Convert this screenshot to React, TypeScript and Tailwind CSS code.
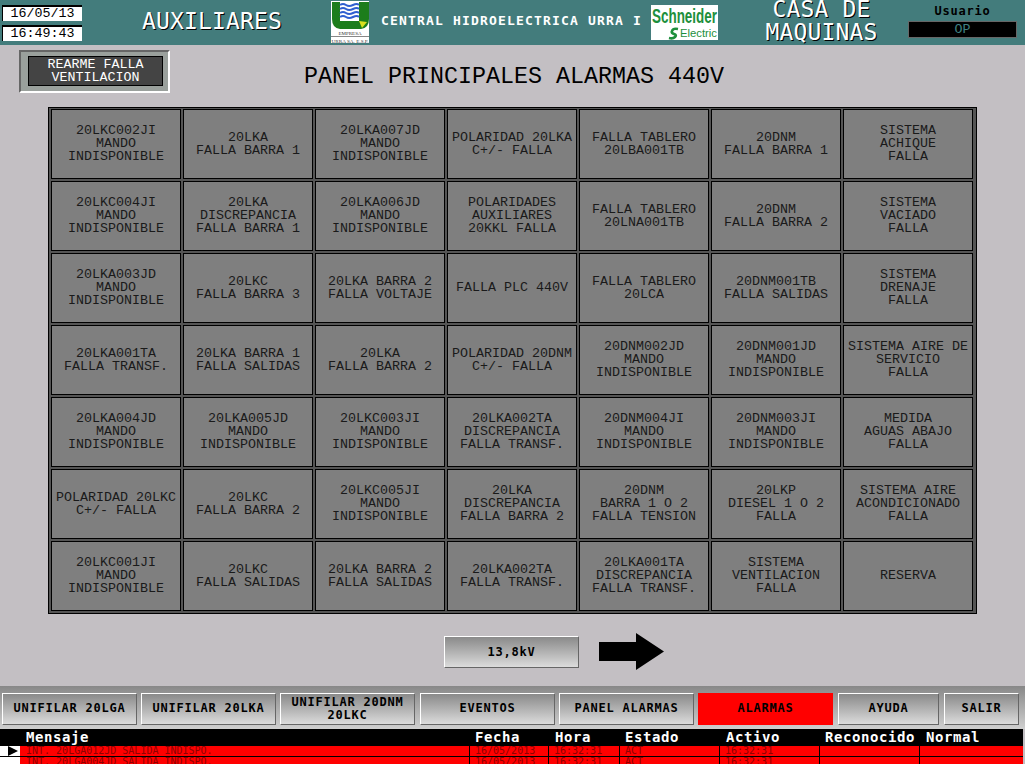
const rows: string[][] = [
  ["20LKC002JI\nMANDO\nINDISPONIBLE", "20LKA\nFALLA BARRA 1", "20LKA007JD\nMANDO\nINDISPONIBLE", "POLARIDAD 20LKA\nC+/- FALLA", "FALLA TABLERO\n20LBA001TB", "20DNM\nFALLA BARRA 1", "SISTEMA\nACHIQUE\nFALLA"],
  ["20LKC004JI\nMANDO\nINDISPONIBLE", "20LKA\nDISCREPANCIA\nFALLA BARRA 1", "20LKA006JD\nMANDO\nINDISPONIBLE", "POLARIDADES\nAUXILIARES\n20KKL FALLA", "FALLA TABLERO\n20LNA001TB", "20DNM\nFALLA BARRA 2", "SISTEMA\nVACIADO\nFALLA"],
  ["20LKA003JD\nMANDO\nINDISPONIBLE", "20LKC\nFALLA BARRA 3", "20LKA BARRA 2\nFALLA VOLTAJE", "FALLA PLC 440V", "FALLA TABLERO\n20LCA", "20DNM001TB\nFALLA SALIDAS", "SISTEMA\nDRENAJE\nFALLA"],
  ["20LKA001TA\nFALLA TRANSF.", "20LKA BARRA 1\nFALLA SALIDAS", "20LKA\nFALLA BARRA 2", "POLARIDAD 20DNM\nC+/- FALLA", "20DNM002JD\nMANDO\nINDISPONIBLE", "20DNM001JD\nMANDO\nINDISPONIBLE", "SISTEMA AIRE DE\nSERVICIO\nFALLA"],
  ["20LKA004JD\nMANDO\nINDISPONIBLE", "20LKA005JD\nMANDO\nINDISPONIBLE", "20LKC003JI\nMANDO\nINDISPONIBLE", "20LKA002TA\nDISCREPANCIA\nFALLA TRANSF.", "20DNM004JI\nMANDO\nINDISPONIBLE", "20DNM003JI\nMANDO\nINDISPONIBLE", "MEDIDA\nAGUAS ABAJO\nFALLA"],
  ["POLARIDAD 20LKC\nC+/- FALLA", "20LKC\nFALLA BARRA 2", "20LKC005JI\nMANDO\nINDISPONIBLE", "20LKA\nDISCREPANCIA\nFALLA BARRA 2", "20DNM\nBARRA 1 O 2\nFALLA TENSION", "20LKP\nDIESEL 1 O 2\nFALLA", "SISTEMA AIRE\nACONDICIONADO\nFALLA"],
  ["20LKC001JI\nMANDO\nINDISPONIBLE", "20LKC\nFALLA SALIDAS", "20LKA BARRA 2\nFALLA SALIDAS", "20LKA002TA\nFALLA TRANSF.", "20LKA001TA\nDISCREPANCIA\nFALLA TRANSF.", "SISTEMA\nVENTILACION\nFALLA", "RESERVA"],
];

const navButtons = [
  { label: "UNIFILAR 20LGA", width: "w-[135px]", gap: "mr-[4px]" },
  { label: "UNIFILAR 20LKA", width: "w-[135px]", gap: "mr-[4px]" },
  { label: "UNIFILAR 20DNM\n20LKC", width: "w-[135px]", gap: "mr-[5px]" },
  { label: "EVENTOS", width: "w-[135px]", gap: "mr-[4px]" },
  { label: "PANEL ALARMAS", width: "w-[135px]", gap: "mr-[4px]" },
  { label: "ALARMAS", width: "w-[135px]", gap: "mr-[5px]", active: true },
  { label: "AYUDA", width: "w-[101px]", gap: "mr-[5px]" },
  { label: "SALIR", width: "w-[75px]", gap: "" },
];

const alarmRows = [
  "INT. 20LGA012JD SALIDA INDISPO.",
  "INT. 20LGA004JD SALIDA INDISPO.",
];

function UrraLogo() {
  return (
    <svg width="38" height="42" viewBox="0 0 38 42" className="shrink-0">
      <rect width="38" height="42" fill="#fff" />
      <path d="M1 1h37v17q0 9-8 10H9q-8-1-8-10z" fill="#1c7d1c" />
      <rect x="9" y="1" width="19" height="19" fill="#fff" />
      <path d="M9 4q3-2 6 0t7 0 6 0M9 8q3-2 6 0t7 0 6 0M9 12q3-2 6 0t7 0 6 0M9 16q3-2 6 0t7 0 6 0" fill="none" stroke="#2f5fd0" strokeWidth="2" />
      <path d="M28 20l8 1-5 6z" fill="#d8e020" />
      <text x="19" y="34" textAnchor="middle" fontSize="5" fontFamily="Liberation Serif" fill="#333">EMPRESA</text>
      <line x1="0" y1="35.5" x2="38" y2="35.5" stroke="#888" />
      <text x="19" y="41.5" textAnchor="middle" fontSize="5" fontFamily="Liberation Serif" fill="#333" textLength="37" lengthAdjust="spacingAndGlyphs">URRA SA. E.S.P.</text>
    </svg>
  );
}

function SchneiderLogo() {
  return (
    <svg width="67" height="35" viewBox="0 0 67 35" className="shrink-0">
      <rect width="67" height="35" fill="#fff" />
      <text x="1" y="18" fontSize="20" fontFamily="Liberation Sans" fontWeight="700" fill="#1d8f3c" textLength="65" lengthAdjust="spacingAndGlyphs">Schneider</text>
      <text x="29" y="32" fontSize="11" fontFamily="Liberation Sans" fill="#1d8f3c" textLength="37" lengthAdjust="spacingAndGlyphs">Electric</text>
      <path d="M27 24q-5-1-6 2-1 2 2 3t1 3q-2 2-6 1" fill="none" stroke="#1d8f3c" strokeWidth="2.6" />
    </svg>
  );
}

function Header() {
  return (
    <header className="flex h-[45px] shrink-0 items-start overflow-hidden bg-[#437c7c]">
      <div className="ml-[2px] mt-[5px] flex w-[80px] shrink-0 flex-col gap-[4px] font-['Liberation_Mono',monospace]">
        <div className="h-[16px] border-l border-t-2 border-black bg-white text-center text-[13.33px] leading-[14px] text-black">16/05/13</div>
        <div className="h-[16px] border-l border-t-2 border-black bg-white text-center text-[13.33px] leading-[14px] text-black">16:49:43</div>
      </div>
      <div className="mt-[7px] w-[249px] shrink-0 pl-[11px] text-center text-[23px] leading-[28px] tracking-[0.15px] text-white [text-shadow:1px_1px_0_#000]">AUXILIARES</div>
      <div className="mt-[1px] shrink-0"><UrraLogo /></div>
      <div className="ml-[12px] mt-[13px] w-[270px] shrink-0 whitespace-nowrap text-[13px] font-bold leading-[16px] tracking-[1.17px] text-white">CENTRAL HIDROELECTRICA URRA I</div>
      <div className="mt-[5px] shrink-0"><SchneiderLogo /></div>
      <div className="-mt-[2px] w-[190px] shrink-0 whitespace-pre-line pl-[17px] text-center text-[23px] leading-[23px] tracking-[0.15px] text-white [text-shadow:1px_1px_0_#000]">{"CASA DE\nMAQUINAS"}</div>
      <div className="mt-[4px] flex w-[109px] shrink-0 flex-col items-center">
        <div className="h-[17px] text-[12px] font-bold leading-[14px] tracking-[0.78px] text-black">Usuario</div>
        <div className="h-[17px] w-full border border-[#666] bg-black text-center font-['Liberation_Mono',monospace] text-[13.33px] leading-[15px] text-[#3f8282]">OP</div>
      </div>
    </header>
  );
}

function AlarmGrid() {
  return (
    <div className="ml-[48px] grid w-[929px] grid-cols-[repeat(7,130px)] gap-[2px] border border-black bg-[#555] pb-[2px] pl-[2px] pr-[3px] pt-[1px] font-['Liberation_Mono',monospace]">
      {rows.flat().map((text, i) => (
        <div key={i} className="flex h-[70px] items-center justify-center whitespace-pre-line border border-black bg-[#7f7f7f] pb-[1px] text-center text-[13.33px] leading-[13px] text-[#1a1a1a]">
          {text}
        </div>
      ))}
    </div>
  );
}

function Footer() {
  return (
    <footer className="flex h-[78px] shrink-0 flex-col">
      <div className="flex h-[43px] items-start bg-gradient-to-b from-[#888] to-[#d0d0d0] pl-[2px] pt-[7px]">
        {navButtons.map((b) => (
          <div
            key={b.label}
            className={`flex h-[32px] shrink-0 items-center justify-center whitespace-pre-line pb-[1px] text-center text-[12px] font-bold leading-[13px] tracking-[0.78px] text-black ${b.width} ${b.gap} ${
              b.active
                ? "bg-[#ff0000]"
                : "border-b border-l border-r border-t border-b-[#666] border-l-white border-r-[#666] border-t-white bg-gradient-to-b from-[#8a8a8a] to-[#dcdcdc]"
            }`}
          >
            {b.label}
          </div>
        ))}
      </div>
      <div className="mr-[2px] h-[35px] overflow-hidden bg-black">
        <div className="flex h-[17px] text-[14px] font-bold leading-[16px] tracking-[0.57px] text-white">
          <span className="ml-[26px] w-[449px]">Mensaje</span>
          <span className="w-[80px]">Fecha</span>
          <span className="w-[70px]">Hora</span>
          <span className="w-[101px]">Estado</span>
          <span className="w-[99px]">Activo</span>
          <span className="w-[101px]">Reconocido</span>
          <span>Normal</span>
        </div>
        {alarmRows.map((msg, i) => (
          <div key={i} className="mb-px flex h-[10px] text-[10px] leading-[10px] text-[#900000]">
            <div className="flex w-[20px] shrink-0 items-center bg-white">
              {i === 0 && (
                <svg width="10" height="10" viewBox="0 0 10 10" className="ml-[8px]">
                  <path d="M0 0l10 5L0 10z" fill="#000" />
                </svg>
              )}
            </div>
            <div className="flex flex-1 bg-[#ff0000]">
              <span className="w-[450px] whitespace-nowrap border-r border-black pl-[6px]">{msg}</span>
              <span className="w-[79px] border-r border-black pl-[5px]">16/05/2013</span>
              <span className="w-[71px] border-r border-black pl-[5px]">16:32:31</span>
              <span className="w-[100px] border-r border-black pl-[5px]">ACT</span>
              <span className="w-[100px] border-r border-black pl-[5px]">16:32:31</span>
              <span className="w-[100px] border-r border-black" />
              <span className="flex-1" />
            </div>
          </div>
        ))}
      </div>
    </footer>
  );
}

export default function App() {
  return (
    <div className="flex h-[764px] w-[1025px] flex-col overflow-hidden bg-[#c3bfc3] font-['DejaVu_Sans_Mono',monospace]">
      <Header />
      <main className="flex flex-1 flex-col">
        <div className="flex h-[62px] items-start">
          <div className="ml-[19px] mt-[5px] h-[43px] w-[151px] border-2 border-b-white border-l-[#666] border-r-white border-t-[#666] bg-[#9aa09c] p-[4px_5px_5px_7px]">
            <div className="flex h-full items-center justify-center whitespace-pre-line border border-black bg-[#444] pb-[1px] text-center font-['Liberation_Mono',monospace] text-[13.33px] leading-[13px] text-white">
              {"REARME FALLA\nVENTILACION"}
            </div>
          </div>
          <h1 className="ml-[134px] mt-[18px] whitespace-nowrap font-['Liberation_Mono',monospace] text-[23.33px] font-normal leading-[28px] text-black">PANEL PRINCIPALES ALARMAS 440V</h1>
        </div>
        <AlarmGrid />
        <div className="ml-[444px] mt-[20px] flex items-center">
          <div className="flex h-[32px] w-[135px] items-center justify-center border-b border-l border-r border-t border-b-[#666] border-l-white border-r-[#666] border-t-white bg-gradient-to-b from-[#8a8a8a] to-[#dcdcdc] pb-[1px] text-[12px] font-bold tracking-[0.78px] text-black">
            13,8kV
          </div>
          <svg width="65" height="37" viewBox="0 0 65 37" className="ml-[20px] -mt-[1px]">
            <path d="M0 9h37V0l28 18.5L37 37V28H0z" fill="#000" />
          </svg>
        </div>
      </main>
      <Footer />
    </div>
  );
}
